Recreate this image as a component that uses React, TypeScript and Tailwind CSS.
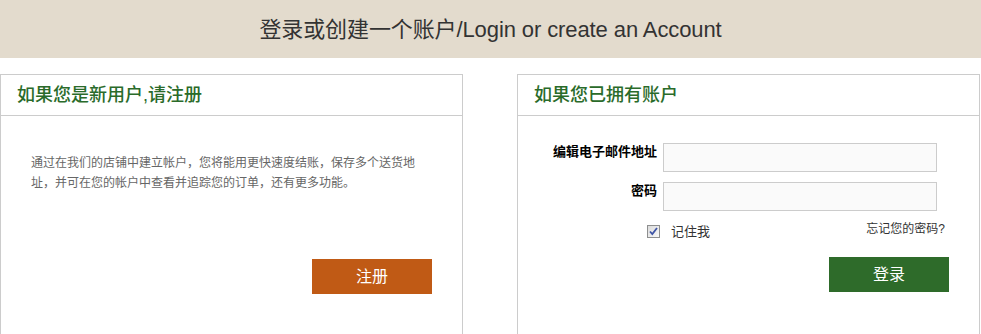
import React from "react";

const font = { fontFamily: '"Liberation Sans", Arial, "Noto Sans CJK SC", sans-serif' };

function Checkbox() {
  return (
    <span className="flex h-[13px] w-[13px] items-center justify-center border border-[#8e8f8f] bg-gradient-to-br from-[#dcdcdc] to-[#f8f8f8]">
      <svg width="9" height="9" viewBox="0 0 9 9">
        <path d="M1 4.5 L3.3 7 L8 1" fill="none" stroke="#3f55a6" strokeWidth="1.8" />
      </svg>
    </span>
  );
}

export default function App() {
  return (
    <div className="h-[334px] w-[981px] overflow-hidden bg-white" style={font}>
      <div className="flex h-[58px] items-center justify-center bg-[#e3dbcd] text-[22px] tracking-[-0.1px] text-[#333]">
        登录或创建一个账户/Login or create an Account
      </div>
      <div className="mt-[16px] flex gap-[54px]">
        <div className="h-[300px] w-[463px] border border-[#ccc]">
          <div className="flex h-[41px] items-center border-b border-[#ccc] px-[16px] text-[18px] font-medium text-[#2a6b2a]">
            如果您是新用户,请注册
          </div>
          <div className="pl-[30px] pr-[30px] pt-[37px]">
            <p className="max-w-[390px] text-[12px] leading-[20px] text-[#666]">
              通过在我们的店铺中建立帐户，您将能用更快速度结账，保存多个送货地址，并可在您的帐户中查看并追踪您的订单，还有更多功能。
            </p>
            <div className="mt-[66px] flex justify-end">
              <button className="h-[35px] w-[120px] bg-[#c05a15] text-[16px] text-white">注册</button>
            </div>
          </div>
        </div>
        <div className="h-[300px] w-[463px] border border-[#ccc]">
          <div className="flex h-[41px] items-center border-b border-[#ccc] px-[16px] text-[18px] font-medium text-[#2a6b2a]">
            如果您已拥有账户
          </div>
          <div className="pt-[27px]">
            <div className="flex gap-[6px]">
              <label className="w-[139px] pt-[1px] text-right text-[13px] font-bold leading-[16px] text-black">编辑电子邮件地址</label>
              <input className="h-[29px] w-[274px] border border-[#ccc] bg-[#fafafa] outline-none" />
            </div>
            <div className="mt-[10px] flex gap-[6px]">
              <label className="w-[139px] pt-[1px] text-right text-[13px] font-bold leading-[16px] text-black">密码</label>
              <input type="password" className="h-[29px] w-[274px] border border-[#ccc] bg-[#fafafa] outline-none" />
            </div>
            <div className="mt-[12px] flex justify-between">
              <div className="mt-[2px] flex items-center gap-[11px] pl-[129px]">
                <Checkbox />
                <span className="text-[13px] leading-[13px] text-[#333]">记住我</span>
              </div>
              <span className="pr-[34px] text-[12px] leading-[12px] text-[#333]">忘记您的密码?</span>
            </div>
            <div className="mt-[19px] flex justify-end pr-[30px]">
              <button className="h-[35px] w-[120px] bg-[#2e6b2a] text-[16px] text-white">登录</button>
            </div>
          </div>
        </div>
      </div>
    </div>
  );
}
